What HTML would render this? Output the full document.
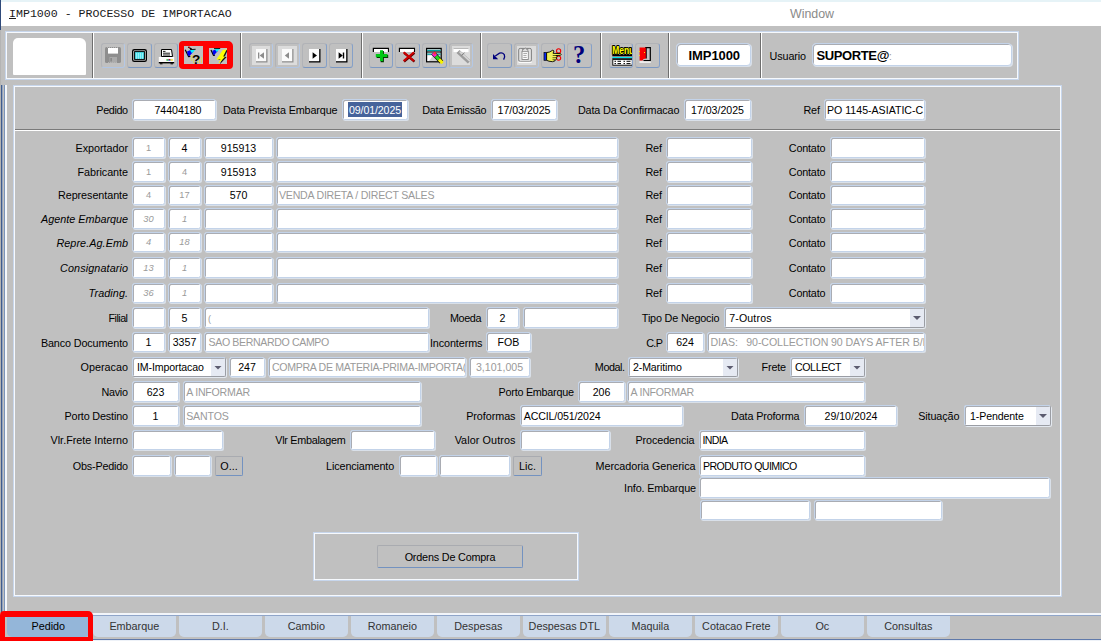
<!DOCTYPE html>
<html><head><meta charset="utf-8"><title>IMP1000 - PROCESSO DE IMPORTACAO</title>
<style>
html,body{margin:0;padding:0;}
body{width:1101px;height:641px;overflow:hidden;background:#c0c0c0;position:relative;font-family:"Liberation Sans",sans-serif;font-size:10.8px;color:#000;}
.a{position:absolute;white-space:pre;}
.l{position:absolute;white-space:pre;text-align:right;line-height:14px;height:14px;}
.i{font-style:italic;}
.f{position:absolute;box-sizing:border-box;background:#fff;border:1px solid #c3d3e9;border-radius:2.5px;box-shadow:inset 1px 1px 0 #a9acb3,1px 1px 0 #d9e0e9;white-space:pre;overflow:hidden;padding:0 3px;font-size:10.6px;}
.c{text-align:center;}
.r{text-align:right;}
.g{color:#9a9a9a;}
.sel{position:absolute;box-sizing:border-box;background:#fff;border:1px solid #c3d3e9;border-right-color:#9a9da4;border-bottom-color:#9a9da4;border-radius:2.5px;box-shadow:inset 1px 1px 0 #a9acb3,1px 1px 0 #e4e9f0;white-space:pre;overflow:hidden;padding:0 4px;font-size:10.6px;}
.sel i{position:absolute;right:0;top:1px;bottom:0;width:14px;background:#e6eaf3;}
.sel i:after{content:"";position:absolute;left:3px;top:calc(50% - 2px);width:8px;height:4px;background:#5c5c70;clip-path:polygon(0 0,100% 0,50% 100%);}
.btn{position:absolute;box-sizing:border-box;background:#c0c0c0;border:1px solid #a9abb0;border-right-color:#7392c0;border-bottom-color:#7392c0;border-radius:2px;text-align:center;white-space:pre;}
.tb{position:absolute;box-sizing:border-box;width:23px;height:25px;top:43px;border:1px solid #b1b3b7;border-right-color:#85a0c8;border-bottom-color:#7b98c2;border-radius:3px;background:#c0c0c0;}
.sep{position:absolute;top:33px;height:45px;width:1px;background:#6e6e6e;box-shadow:1px 0 0 #fff;}
.tab{position:absolute;top:616px;height:21px;box-sizing:border-box;background:#ccd9ea;border-radius:0 0 5px 5px;text-align:center;line-height:20px;white-space:pre;color:#333;}
</style></head><body>

<div class="a" style="left:0;top:0;width:1101px;height:26px;background:#fff"></div>
<div class="a" style="left:0;top:0;width:1101px;height:2px;background:#e6f3f7"></div>
<div class="a" style="left:9px;top:7px;font-family:'Liberation Mono',monospace;font-size:11.6px;line-height:14px;color:#1a1a1a"><u>I</u>MP1000 - PROCESSO DE IMPORTACAO</div>
<div class="a" style="left:790px;top:7px;font-size:12.4px;line-height:14px;color:#8a8a8a">Window</div>
<div class="a" style="left:0;top:0;width:1px;height:30px;background:#2f4a7a"></div>
<div class="a" style="left:0;top:30px;width:1px;height:583px;background:#b4b4b4"></div>
<div class="a" style="left:1px;top:85px;width:1px;height:528px;background:#3f5c8e"></div>
<div class="a" style="left:2px;top:85px;width:1px;height:528px;background:#93a3bd"></div>
<div class="a" style="left:4px;top:85px;width:1px;height:528px;background:#7b94ba"></div>
<div class="a" style="left:5px;top:85px;width:2px;height:528px;background:#f4f7fb"></div>
<div class="a" style="left:5px;top:31px;width:1014px;height:49px;box-sizing:border-box;border:1px solid #c7d6ec;box-shadow:inset 0 0 0 1px #f6f9fd"></div>
<div class="a" style="left:13px;top:38px;width:73px;height:37px;background:#fff;border-radius:5px 6px 1px 1px"></div>
<div class="sep" style="left:92px"></div>
<div class="sep" style="left:240px"></div>
<div class="sep" style="left:361px"></div>
<div class="sep" style="left:480px"></div>
<div class="sep" style="left:600px"></div>
<div class="sep" style="left:668px"></div>
<div class="sep" style="left:760px"></div>
<div class="tb" style="left:101px;width:24px;border-right-color:#b4c8e6;border-bottom-color:#b0c5e4"></div>
<div class="tb" style="left:127px;width:25px"></div>
<div class="tb" style="left:154px;width:24px"></div>
<svg class="a" style="left:104px;top:46px" width="18" height="18" viewBox="104 46 18 18"><rect x="105" y="47" width="16" height="16" rx="1.6" fill="#8e8e8e"/><rect x="108" y="48" width="10" height="5.600" fill="#fff"/><rect x="109.500" y="57" width="7.500" height="6" fill="#aaa"/><rect x="110.300" y="58" width="1.700" height="3.500" fill="#8a8a8a"/><path d="M107 47.500H119 M108 62.500H118" stroke="#b5b5b5" stroke-width="1" stroke-dasharray="1 1"/></svg>
<svg class="a" style="left:131px;top:48px" width="17" height="15" viewBox="131 48 17 15"><rect x="132.700" y="49.700" width="13.600" height="11.600" rx="1.600" fill="#fff" stroke="#000" stroke-width="1.400"/><rect x="134.600" y="51.600" width="9.800" height="7.800" fill="#4fe3ee" stroke="#000" stroke-width="1"/><path d="M136 54H143 M136 56H143 M136 58H143" stroke="#d8fbff" stroke-width="1" stroke-dasharray="1 1"/></svg>
<svg class="a" style="left:157px;top:47px" width="19" height="18" viewBox="157 47 19 18"><path d="M161.500 56.500 V49.500 H171.500 L172.500 56.500Z" fill="#fff" stroke="#000" stroke-width="1"/><path d="M163 51.400H165.500 M163 53.200H170 M163 55H170" stroke="#000" stroke-width="0.900"/><path d="M158.800 57 H174.200 V62.400 H158.800Z" fill="#fafafa"/><path d="M159 57.500H174" stroke="#fff" stroke-width="1"/><rect x="166.400" y="59.300" width="2" height="1.300" fill="#00b400"/><rect x="168.400" y="59.300" width="2.200" height="1.300" fill="#0000e0"/><rect x="168.700" y="59" width="1.500" height="0.800" fill="#e00000"/><rect x="170.600" y="59.300" width="2.200" height="1.300" fill="#f0e000"/><path d="M158.800 62.700H174.200" stroke="#000" stroke-width="1.400"/><rect x="160" y="63.300" width="2.500" height="1" fill="#000"/><rect x="170.500" y="63.300" width="2.500" height="1" fill="#000"/></svg>
<div class="a" style="left:179px;top:41px;width:54px;height:28px;background:#fe0000;border-radius:4px 5px 4px 4px"></div>
<div class="a" style="left:184px;top:46px;width:19px;height:18px;background:#c0c0c0"></div>
<div class="a" style="left:209px;top:48px;width:18px;height:16px;background:#c0c0c0"></div>
<svg class="a" style="left:184px;top:46px" width="19" height="18" viewBox="184 46 19 18"><path d="M185.200 49.800 L188.600 56.500 L190.300 56.300" fill="none" stroke="#000" stroke-width="1.200"/><path d="M188.200 47 L191.800 49.300" stroke="#000" stroke-width="1.200"/><circle cx="189.300" cy="47.200" r="0.700" fill="#e00"/><path d="M187 51.400 L190.500 50 L193.600 51.600 L189 56.400 L187.600 54.500Z" fill="#0000f4"/><path d="M189.800 50.200 L195.400 49.600 L192 53.200Z" fill="#00f4ff"/><path d="M190 49.600 L195.600 49.300" stroke="#000" stroke-width="0.900"/><g fill="#f4ec00"><rect x="191" y="55.500" width="1" height="1"/><rect x="193" y="55.500" width="1" height="1"/><rect x="191" y="57.500" width="1" height="1"/><rect x="193" y="57.500" width="1" height="1"/><rect x="191" y="59.500" width="1" height="1"/><rect x="193" y="59.500" width="1" height="1"/><rect x="193" y="61.500" width="1" height="1"/><rect x="199" y="57.500" width="1" height="1"/><rect x="201" y="57.500" width="1" height="1"/><rect x="199" y="59.500" width="1" height="1"/><rect x="201" y="59.500" width="1" height="1"/><rect x="199" y="61.500" width="1" height="1"/><rect x="201" y="61.500" width="1" height="1"/><rect x="197" y="61.500" width="1" height="1"/></g><text x="196.200" y="63.800" text-anchor="middle" font-family="Liberation Sans, sans-serif" font-weight="bold" font-size="13.500" fill="#000">?</text></svg>
<svg class="a" style="left:209px;top:48px" width="18" height="16" viewBox="209 48 18 16"><path d="M211 50 L213.500 55.300 L215 55.200" fill="none" stroke="#000" stroke-width="1.200"/><path d="M212.400 50.800 L215.500 49.600 L217.800 51 L214 55.300 L212.900 53.800Z" fill="#0000f4"/><path d="M214.600 48.900 L220 48.700 L216.700 51.900Z" fill="#00f4ff"/><path d="M214 48.600 L220.200 48.500" stroke="#000" stroke-width="0.900"/><path d="M223.500 50.100 L227 49.400 L223.800 56.300 L225.800 56.600 L218.800 64 L220.800 59.600 L217.300 59.600Z" fill="#111" transform="translate(0.900,0.400)"/><path d="M222.800 49.900 L226.800 49.300 L223.200 56.400 L225.300 56.600 L218.300 63.900 L220.400 59.500 L216.300 59.500Z" fill="#ffff00"/></svg>
<div class="tb" style="left:249px;width:24px;border-right-color:#b4c8e6;border-bottom-color:#b0c5e4"></div>
<div class="a" style="left:252px;top:46px;width:18px;height:19px;background:#dcdcdc"></div>
<svg class="a" style="left:253px;top:47px" width="17" height="18" viewBox="253 47 17 18"><rect x="256" y="49" width="11.500" height="13.500" fill="#909090"/><rect x="256" y="49" width="10.200" height="12.200" fill="#fbfbfb"/><rect x="258.0" y="52.500" width="1.300" height="6" fill="#8c8c8c"/><path d="M264.0 52.300 V58.700 L259.59999999999997 55.500Z" fill="#8c8c8c"/></svg>
<div class="tb" style="left:275px;width:25px;border-right-color:#b4c8e6;border-bottom-color:#b0c5e4"></div>
<div class="a" style="left:278px;top:46px;width:19px;height:19px;background:#dcdcdc"></div>
<svg class="a" style="left:279px;top:47px" width="17" height="18" viewBox="279 47 17 18"><rect x="282" y="49" width="11.500" height="13.500" fill="#909090"/><rect x="282" y="49" width="10.200" height="12.200" fill="#fbfbfb"/><path d="M289.0 52.300 V58.700 L284.8 55.500Z" fill="#8c8c8c"/></svg>
<div class="tb" style="left:302px;width:25px"></div>
<svg class="a" style="left:306px;top:47px" width="17" height="18" viewBox="306 47 17 18"><rect x="309" y="49" width="11.500" height="13.500" fill="#000"/><rect x="309" y="49" width="10.200" height="12.200" fill="#fbfbfb"/><path d="M312.59999999999997 52.300 V58.700 L317.0 55.500Z" fill="#000"/></svg>
<div class="tb" style="left:329px;width:24px"></div>
<svg class="a" style="left:333px;top:47px" width="17" height="18" viewBox="333 47 17 18"><rect x="336" y="49" width="11.500" height="13.500" fill="#000"/><rect x="336" y="49" width="10.200" height="12.200" fill="#fbfbfb"/><path d="M338.59999999999997 52.300 V58.700 L342.8 55.500Z" fill="#000"/><rect x="342.8" y="52.500" width="1.400" height="6" fill="#000"/></svg>
<div class="tb" style="left:369px;width:24px"></div>
<div class="tb" style="left:395px;width:25px"></div>
<div class="tb" style="left:422px;width:25px"></div>
<div class="tb" style="left:449px;width:24px;border-right-color:#b4c8e6;border-bottom-color:#b0c5e4"></div>
<div class="a" style="left:452px;top:46px;width:18px;height:19px;background:#dcdcdc"></div>
<svg class="a" style="left:372px;top:47px" width="19" height="16" viewBox="372 47 19 16"><path d="M373.400 52 V48.400 H388.300 V52" fill="#fff" stroke="#000" stroke-width="1.300"/><rect x="374" y="49" width="13.700" height="3" fill="#fff"/><path d="M380 50.500 H383.300 V54.200 H387.600 V57.400 H383.300 V61.600 H380 V57.400 H376 V54.200 H380Z" fill="#003c00" transform="translate(0.600,0.600)"/><path d="M380 50.300 H383 V54 H387.300 V57 H383 V61 H380 V57 H375.800 V54 H380Z" fill="#00c814"/></svg>
<svg class="a" style="left:398px;top:47px" width="20" height="16" viewBox="398 47 20 16"><path d="M399.500 52 V48.400 H414.400 V52" fill="#fff" stroke="#000" stroke-width="1.300"/><rect x="400.100" y="49" width="13.700" height="3" fill="#fff"/><path d="M403.600 52.300 L414 61 M414 52.300 L403.600 61" stroke="#5a0000" stroke-width="2.200" transform="translate(0.500,0.600)"/><path d="M403.600 52.300 L414 61 M414 52.300 L403.600 61" stroke="#cc0000" stroke-width="2.100"/></svg>
<svg class="a" style="left:425px;top:47px" width="20" height="18" viewBox="425 47 20 18"><rect x="426.600" y="48.400" width="14.600" height="13.400" fill="#d0d0d0" stroke="#000" stroke-width="1.200"/><rect x="427.200" y="49.800" width="13.400" height="1.400" fill="#00a0a0"/><path d="M427 52H441" stroke="#000" stroke-width="1"/><rect x="427.200" y="53.600" width="13.400" height="1.200" fill="#00a0a0"/><path d="M427.500 55.500 H433 L429 61 H427.500Z" fill="#fff"/><path d="M433 53 L441.500 62" stroke="#000" stroke-width="4.600"/><path d="M433 53 L436 56.200" stroke="#ff20d0" stroke-width="3.400"/><path d="M434 52.600 L435.600 54" stroke="#ff3030" stroke-width="2.600"/><path d="M436 56.200 L439 59.400" stroke="#20d820" stroke-width="3.400"/><path d="M439 59.400 L442.600 63.200" stroke="#f4f000" stroke-width="3.200"/></svg>
<svg class="a" style="left:452px;top:47px" width="20" height="18" viewBox="452 47 20 18"><rect x="453.500" y="48.300" width="15" height="3.800" fill="#fff"/><path d="M453.500 48.500H468.500" stroke="#b8b8b8" stroke-width="1"/><path d="M458 51.500 L469.300 62" stroke="#9c9c9c" stroke-width="4.400"/><path d="M459.600 51.600 L470 61.200" stroke="#d6d6d6" stroke-width="1.600"/><path d="M461.500 55.500 L464.500 52.800" stroke="#7c7c7c" stroke-width="1"/></svg>
<div class="tb" style="left:487px;width:25px"></div>
<div class="tb" style="left:514px;width:25px;border-right-color:#b4c8e6;border-bottom-color:#b0c5e4"></div>
<div class="a" style="left:517px;top:46px;width:19px;height:19px;background:#dcdcdc"></div>
<div class="tb" style="left:541px;width:24px"></div>
<div class="tb" style="left:567px;width:25px"></div>
<svg class="a" style="left:491px;top:50px" width="17" height="13" viewBox="491 50 17 13"><path d="M495.300 56 L499.500 53.200 Q502.500 52.300 504.300 54.600 Q505.300 56.500 503.600 59.600" fill="none" stroke="#00007c" stroke-width="1.300"/><path d="M493 54 L493 59.200 L498.200 59.200Z" fill="#00007c"/></svg>
<svg class="a" style="left:517px;top:46px" width="18" height="19" viewBox="517 46 18 19"><rect x="518.700" y="48.400" width="12.700" height="13" rx="1.500" fill="#e2e2e2" stroke="#808080" stroke-width="1"/><path d="M518.500 62.300H531.600" stroke="#fff" stroke-width="1.100"/><rect x="522" y="51.300" width="6.300" height="8.200" fill="#fff" stroke="#868686" stroke-width="0.900"/><path d="M522.500 50.800 V49.300 H523.800 Q525.200 46.600 526.600 49.300 H527.800 V50.800" fill="#e2e2e2" stroke="#808080" stroke-width="0.900"/><path d="M523.300 53.400H527 M523.300 55.400H526.500 M523.300 57.400H526.800" stroke="#9a9a9a" stroke-width="0.900"/></svg>
<svg class="a" style="left:543px;top:48px" width="20" height="16" viewBox="543 48 20 16"><circle cx="558.600" cy="50.900" r="2.100" fill="none" stroke="#f00000" stroke-width="1.100"/><circle cx="558.600" cy="58.100" r="2.100" fill="none" stroke="#f00000" stroke-width="1.100"/><path d="M557.800 52.800 L556.600 56 M557.800 56.200 L556.600 53.200" stroke="#f00000" stroke-width="1"/><rect x="544" y="52.500" width="2.600" height="7.800" fill="#0a28f0" stroke="#000" stroke-width="0.700"/><path d="M546.600 52.600 L549.500 52 L552.800 50.200 L554 51 L553 53.300 L560.500 53.600 Q561.800 54.400 560.500 55.300 L556 55.500 L557 56.600 L556.300 57.800 L556.600 58.800 L555.400 59.800 L555 60.800 L552.500 61.700 L549 61.200 L546.600 60.300Z" fill="#f2f250" stroke="#000" stroke-width="0.900" stroke-linejoin="round"/><path d="M552.500 55.500H556 M552.500 57.700H556 M552.500 59.700H555" stroke="#000" stroke-width="0.600"/><path d="M548 54L552 58 M548 56.500L551.500 60 M550 53L553 56" stroke="#d8d8a0" stroke-width="0.500"/></svg>
<svg class="a" style="left:571px;top:44px" width="18" height="22" viewBox="571 44 18 22"><text x="579.200" y="63" text-anchor="middle" font-family="Liberation Serif, serif" font-weight="bold" font-size="24.500" fill="#00007c">?</text></svg>
<div class="tb" style="left:609px;width:24px"></div>
<div class="tb" style="left:635px;width:25px"></div>
<svg class="a" style="left:611px;top:45px" width="21" height="22" viewBox="611 45 21 22"><text x="612.200" y="54.300" font-family="Liberation Sans, sans-serif" font-weight="bold" font-size="10.500" fill="#000" stroke="#000" stroke-width="2" stroke-linejoin="round" textLength="22" lengthAdjust="spacingAndGlyphs">Menu</text><text x="612.200" y="54.300" font-family="Liberation Sans, sans-serif" font-weight="bold" font-size="10.500" fill="#ffff00" textLength="22" lengthAdjust="spacingAndGlyphs">Menu</text><rect x="612.300" y="55" width="20" height="1.300" fill="#000"/><rect x="612.300" y="57" width="20" height="1.300" fill="#00e8f0"/><rect x="612.300" y="58.300" width="20" height="0.900" fill="#000"/><rect x="612.800" y="59.600" width="19.500" height="5.600" fill="#fff" stroke="#000" stroke-width="0.900"/><path d="M614.500 61.300H616 M617.500 61.300H621 M623.500 61.300H625 M626.500 61.300H630.500 M614.500 63.600H616 M617.500 63.600H621 M623.500 63.600H625 M626.500 63.600H630.500" stroke="#000" stroke-width="1"/></svg>
<svg class="a" style="left:638px;top:46px" width="14" height="18" viewBox="638 46 14 18"><path d="M645 47.600 H650.300 V60.600 H643.500" fill="#c4c4c4" stroke="#000" stroke-width="1.200"/><path d="M639.600 47.400 H646.200 V58.500 L643.500 58.900 L642.500 60.400 H639.600Z" fill="#f80000"/><path d="M646.300 47.400V58.500" stroke="#000" stroke-width="0.900"/><rect x="644" y="52" width="1" height="1" fill="#ffe000"/><rect x="638.800" y="51" width="1" height="1" fill="#ffe000"/><rect x="638.800" y="55" width="1" height="1" fill="#ffe000"/><path d="M639.500 62H650.800" stroke="#fff" stroke-width="1.400"/></svg>
<div class="f" style="left:676px;top:43px;width:75px;height:23px;line-height:23px;font-weight:bold;font-size:13px;border-radius:4px;padding:0"><span style="position:absolute;left:11.600px;top:0;letter-spacing:-0.100px">IMP1000</span></div>
<div class="a" style="left:769.500px;top:49px;line-height:14px;letter-spacing:-0.100px">Usuario</div>
<div class="f" style="left:812px;top:43px;width:200px;height:23px;line-height:23px;font-weight:bold;font-size:13px;border-radius:4px;padding:0"><span style="position:absolute;left:3.600px;top:0;letter-spacing:-0.400px">SUPORTE@<span style="font-weight:normal;color:#999;font-size:10px">:</span></span></div>
<div class="a" style="left:13px;top:85px;width:1049px;height:512px;box-sizing:border-box;border:1px solid #c7d6ec;box-shadow:inset 0 0 0 1px #f6f9fd"></div>
<div class="a" style="left:15px;top:129px;width:1045px;height:1px;background:#7a7a7a"></div>
<div class="a" style="left:15px;top:130px;width:1045px;height:1px;background:#fff"></div>
<div class="l" style="right:973.39px;top:103px;letter-spacing:-0.388px;">Pedido</div>
<div class="f " style="left:132px;top:99px;width:84px;height:21px;line-height:20px;"><span style="letter-spacing:-0.020px;position:absolute;left:21.5px;top:0;">74404180</span></div>
<div class="l" style="right:763.64px;top:103px;letter-spacing:-0.143px;">Data Prevista Embarque</div>
<div class="f" style="left:342px;top:99px;width:66px;height:21px"><span style="position:absolute;left:5px;top:2px;height:15px;line-height:17px;background:#46639a;color:#fff;width:54px;text-align:center;letter-spacing:-0.105px;">09/01/2025</span></div>
<div class="l" style="right:614.77px;top:103px;letter-spacing:-0.269px;">Data Emissão</div>
<div class="f c" style="left:491px;top:99px;width:66px;height:21px;line-height:20px;">17/03/2025</div>
<div class="l" style="right:421.62px;top:103px;letter-spacing:-0.123px;">Data Da Confirmacao</div>
<div class="f c" style="left:684px;top:99px;width:67px;height:21px;line-height:20px;">17/03/2025</div>
<div class="l" style="right:281.10px;top:103px;letter-spacing:-0.102px;">Ref</div>
<div class="f " style="left:824px;top:99px;width:101px;height:21px;line-height:20px;"><span style="position:absolute;left:2px;top:0;">PO 1145-ASIATIC-C</span></div>
<div class="l" style="right:973.03px;top:141px;letter-spacing:-0.033px;">Exportador</div>
<div class="f c g" style="left:132px;top:137px;width:33px;height:21px;line-height:20px;font-size:9.3px;">1</div>
<div class="f c " style="left:168px;top:137px;width:33px;height:21px;line-height:20px;">4</div>
<div class="f c" style="left:204px;top:137px;width:69px;height:21px;line-height:20px;">915913</div>
<div class="f g" style="left:276px;top:137px;width:342px;height:21px;line-height:20px;"></div>
<div class="l" style="right:439.10px;top:141px;letter-spacing:-0.102px;">Ref</div>
<div class="f " style="left:666px;top:137px;width:86px;height:21px;line-height:20px;"></div>
<div class="l" style="right:275.69px;top:141px;letter-spacing:-0.189px;">Contato</div>
<div class="f " style="left:830px;top:137px;width:95px;height:21px;line-height:20px;"></div>
<div class="l" style="right:973.05px;top:165px;letter-spacing:-0.052px;">Fabricante</div>
<div class="f c g" style="left:132px;top:161px;width:33px;height:21px;line-height:20px;font-size:9.3px;">1</div>
<div class="f c g" style="left:168px;top:161px;width:33px;height:21px;line-height:20px;font-size:9.3px;">4</div>
<div class="f c" style="left:204px;top:161px;width:69px;height:21px;line-height:20px;">915913</div>
<div class="f g" style="left:276px;top:161px;width:342px;height:21px;line-height:20px;"></div>
<div class="l" style="right:439.10px;top:165px;letter-spacing:-0.102px;">Ref</div>
<div class="f " style="left:666px;top:161px;width:86px;height:21px;line-height:20px;"></div>
<div class="l" style="right:275.69px;top:165px;letter-spacing:-0.189px;">Contato</div>
<div class="f " style="left:830px;top:161px;width:95px;height:21px;line-height:20px;"></div>
<div class="l" style="right:973.06px;top:188px;letter-spacing:-0.065px;">Representante</div>
<div class="f c g" style="left:132px;top:185px;width:33px;height:20px;line-height:19px;font-size:9.3px;">4</div>
<div class="f c g" style="left:168px;top:185px;width:33px;height:20px;line-height:19px;font-size:9.3px;">17</div>
<div class="f c" style="left:204px;top:185px;width:69px;height:20px;line-height:19px;">570</div>
<div class="f g" style="left:276px;top:185px;width:342px;height:20px;line-height:19px;"><span style="letter-spacing:-0.233px;position:absolute;left:2px;top:0;">VENDA DIRETA / DIRECT SALES</span></div>
<div class="l" style="right:439.10px;top:188px;letter-spacing:-0.102px;">Ref</div>
<div class="f " style="left:666px;top:185px;width:86px;height:20px;line-height:19px;"></div>
<div class="l" style="right:275.69px;top:188px;letter-spacing:-0.189px;">Contato</div>
<div class="f " style="left:830px;top:185px;width:95px;height:20px;line-height:19px;"></div>
<div class="l i" style="right:973.00px;top:212px;letter-spacing:-0.004px;">Agente Embarque</div>
<div class="f c g i" style="left:132px;top:208px;width:33px;height:21px;line-height:20px;font-size:9.3px;">30</div>
<div class="f c g i" style="left:168px;top:208px;width:33px;height:21px;line-height:20px;font-size:9.3px;">1</div>
<div class="f c" style="left:204px;top:208px;width:69px;height:21px;line-height:20px;"></div>
<div class="f g" style="left:276px;top:208px;width:342px;height:21px;line-height:20px;"></div>
<div class="l" style="right:439.10px;top:212px;letter-spacing:-0.102px;">Ref</div>
<div class="f " style="left:666px;top:208px;width:86px;height:21px;line-height:20px;"></div>
<div class="l" style="right:275.69px;top:212px;letter-spacing:-0.189px;">Contato</div>
<div class="f " style="left:830px;top:208px;width:95px;height:21px;line-height:20px;"></div>
<div class="l i" style="right:972.93px;top:236px;letter-spacing:0.073px;">Repre.Ag.Emb</div>
<div class="f c g i" style="left:132px;top:232px;width:33px;height:20px;line-height:19px;font-size:9.3px;">4</div>
<div class="f c g i" style="left:168px;top:232px;width:33px;height:20px;line-height:19px;font-size:9.3px;">18</div>
<div class="f c" style="left:204px;top:232px;width:69px;height:20px;line-height:19px;"></div>
<div class="f g" style="left:276px;top:232px;width:342px;height:20px;line-height:19px;"></div>
<div class="l" style="right:439.10px;top:236px;letter-spacing:-0.102px;">Ref</div>
<div class="f " style="left:666px;top:232px;width:86px;height:20px;line-height:19px;"></div>
<div class="l" style="right:275.69px;top:236px;letter-spacing:-0.189px;">Contato</div>
<div class="f " style="left:830px;top:232px;width:95px;height:20px;line-height:19px;"></div>
<div class="l i" style="right:972.90px;top:261px;letter-spacing:0.105px;">Consignatario</div>
<div class="f c g i" style="left:132px;top:257px;width:33px;height:21px;line-height:20px;font-size:9.3px;">13</div>
<div class="f c g i" style="left:168px;top:257px;width:33px;height:21px;line-height:20px;font-size:9.3px;">1</div>
<div class="f c" style="left:204px;top:257px;width:69px;height:21px;line-height:20px;"></div>
<div class="f g" style="left:276px;top:257px;width:342px;height:21px;line-height:20px;"></div>
<div class="l" style="right:439.10px;top:261px;letter-spacing:-0.102px;">Ref</div>
<div class="f " style="left:666px;top:257px;width:86px;height:21px;line-height:20px;"></div>
<div class="l" style="right:275.69px;top:261px;letter-spacing:-0.189px;">Contato</div>
<div class="f " style="left:830px;top:257px;width:95px;height:21px;line-height:20px;"></div>
<div class="l i" style="right:972.91px;top:286px;letter-spacing:0.086px;">Trading.</div>
<div class="f c g i" style="left:132px;top:283px;width:33px;height:20px;line-height:19px;font-size:9.3px;">36</div>
<div class="f c g i" style="left:168px;top:283px;width:33px;height:20px;line-height:19px;font-size:9.3px;">1</div>
<div class="f c" style="left:204px;top:283px;width:69px;height:20px;line-height:19px;"></div>
<div class="f g" style="left:276px;top:283px;width:342px;height:20px;line-height:19px;"></div>
<div class="l" style="right:439.10px;top:286px;letter-spacing:-0.102px;">Ref</div>
<div class="f " style="left:666px;top:283px;width:86px;height:20px;line-height:19px;"></div>
<div class="l" style="right:275.69px;top:286px;letter-spacing:-0.189px;">Contato</div>
<div class="f " style="left:830px;top:283px;width:95px;height:20px;line-height:19px;"></div>
<div class="l" style="right:973.53px;top:311px;letter-spacing:-0.533px;">Filial</div>
<div class="f " style="left:132px;top:307px;width:33px;height:21px;line-height:20px;"></div>
<div class="f c" style="left:168px;top:307px;width:33px;height:21px;line-height:20px;">5</div>
<div class="f g" style="left:204px;top:307px;width:225px;height:21px;line-height:20px;"><span style="font-size:9px">(</span></div>
<div class="l" style="right:619.86px;top:311px;letter-spacing:-0.364px;">Moeda</div>
<div class="f c" style="left:486px;top:307px;width:33px;height:21px;line-height:20px;">2</div>
<div class="f " style="left:523px;top:307px;width:95px;height:21px;line-height:20px;"></div>
<div class="l" style="right:381.67px;top:311px;letter-spacing:-0.169px;">Tipo De Negocio</div>
<div class="sel" style="left:724px;top:307px;width:201px;height:21px;line-height:20px"><span style="letter-spacing:0.158px;position:absolute;left:4.2000000000000455px;top:0;">7-Outros</span><i></i></div>
<div class="l" style="right:973.12px;top:336px;letter-spacing:-0.123px;">Banco Documento</div>
<div class="f c" style="left:132px;top:332px;width:33px;height:20px;line-height:19px;">1</div>
<div class="f c" style="left:168px;top:332px;width:33px;height:20px;line-height:19px;">3357</div>
<div class="f g" style="left:204px;top:332px;width:225px;height:20px;line-height:19px;"><span style="letter-spacing:-0.374px;position:absolute;left:3.5px;top:0;">SAO BERNARDO CAMPO</span></div>
<div class="l" style="right:618.59px;top:336px;letter-spacing:-0.092px;">Inconterms</div>
<div class="f c" style="left:486px;top:332px;width:45px;height:20px;line-height:19px;">FOB</div>
<div class="l" style="right:438.57px;top:336px;letter-spacing:-0.568px;">C.P</div>
<div class="f c" style="left:666px;top:332px;width:38px;height:20px;line-height:19px;">624</div>
<div class="f g" style="left:707px;top:332px;width:218px;height:20px;line-height:19px;"><span style="letter-spacing:-0.086px;position:absolute;left:2.5px;top:0;">DIAS:   90-COLLECTION 90 DAYS AFTER B/I</span></div>
<div class="l" style="right:972.99px;top:360px;letter-spacing:0.009px;">Operacao</div>
<div class="sel" style="left:132px;top:357px;width:94px;height:20px;line-height:19px"><span style="letter-spacing:-0.125px;position:absolute;left:4px;top:0;">IM-Importacao</span><i></i></div>
<div class="f c" style="left:229px;top:357px;width:36px;height:20px;line-height:19px;">247</div>
<div class="f g" style="left:268px;top:357px;width:198px;height:20px;line-height:19px;"><span style="letter-spacing:-0.324px;position:absolute;left:3px;top:0;">COMPRA DE MATERIA-PRIMA-IMPORTA(</span></div>
<div class="f g c" style="left:469px;top:357px;width:61px;height:20px;line-height:19px;">3,101,005</div>
<div class="l" style="right:476.45px;top:360px;letter-spacing:-0.452px;">Modal.</div>
<div class="sel" style="left:628px;top:357px;width:110px;height:20px;line-height:19px"><span style="letter-spacing:-0.136px;position:absolute;left:4px;top:0;">2-Maritimo</span><i></i></div>
<div class="l" style="right:315.20px;top:360px;letter-spacing:-0.201px;">Frete</div>
<div class="sel" style="left:790px;top:357px;width:75px;height:20px;line-height:19px"><span style="letter-spacing:-0.384px;position:absolute;left:4px;top:0;">COLLECT</span><i></i></div>
<div class="l" style="right:973.26px;top:385px;letter-spacing:-0.262px;">Navio</div>
<div class="f c" style="left:132px;top:381px;width:47px;height:21px;line-height:20px;">623</div>
<div class="f g" style="left:183px;top:381px;width:238px;height:21px;line-height:20px;"><span style="letter-spacing:-0.216px;position:absolute;left:2.1999999999999886px;top:0;">A INFORMAR</span></div>
<div class="l" style="right:527.25px;top:385px;letter-spacing:-0.246px;">Porto Embarque</div>
<div class="f c" style="left:578px;top:381px;width:47px;height:21px;line-height:20px;">206</div>
<div class="f g" style="left:627px;top:381px;width:238px;height:21px;line-height:20px;"><span style="letter-spacing:-0.246px;position:absolute;left:2.5px;top:0;">A INFORMAR</span></div>
<div class="l" style="right:973.16px;top:409px;letter-spacing:-0.164px;">Porto Destino</div>
<div class="f c" style="left:132px;top:405px;width:47px;height:21px;line-height:20px;">1</div>
<div class="f g" style="left:183px;top:405px;width:238px;height:21px;line-height:20px;"><span style="letter-spacing:-0.149px;position:absolute;left:2.1999999999999886px;top:0;">SANTOS</span></div>
<div class="l" style="right:585.56px;top:409px;letter-spacing:-0.057px;">Proformas</div>
<div class="f " style="left:520px;top:405px;width:163px;height:21px;line-height:20px;"><span style="letter-spacing:-0.112px;position:absolute;left:2.7000000000000455px;top:0;">ACCIL/051/2024</span></div>
<div class="l" style="right:301.65px;top:409px;letter-spacing:-0.148px;">Data Proforma</div>
<div class="f " style="left:804px;top:405px;width:93px;height:21px;line-height:20px;"><span style="letter-spacing:-0.005px;position:absolute;left:19.5px;top:0;">29/10/2024</span></div>
<div class="l" style="right:141.59px;top:409px;letter-spacing:-0.091px;">Situação</div>
<div class="sel" style="left:964px;top:405px;width:87px;height:21px;line-height:20px"><span style="letter-spacing:-0.111px;position:absolute;left:5px;top:0;">1-Pendente</span><i></i></div>
<div class="l" style="right:973.00px;top:433px;letter-spacing:0.004px;">Vlr.Frete Interno</div>
<div class="f " style="left:132px;top:430px;width:91px;height:20px;line-height:19px;"></div>
<div class="l" style="right:755.58px;top:433px;letter-spacing:-0.279px;">Vlr Embalagem</div>
<div class="f " style="left:350px;top:430px;width:85px;height:20px;line-height:19px;"></div>
<div class="l" style="right:585.40px;top:433px;letter-spacing:0.098px;">Valor Outros</div>
<div class="f " style="left:520px;top:430px;width:90px;height:20px;line-height:19px;"></div>
<div class="l" style="right:406.59px;top:433px;letter-spacing:-0.094px;">Procedencia</div>
<div class="f " style="left:699px;top:430px;width:166px;height:20px;line-height:19px;"><span style="letter-spacing:-0.654px;position:absolute;left:2.5px;top:0;">INDIA</span></div>
<div class="l" style="right:973.20px;top:459px;letter-spacing:-0.203px;">Obs-Pedido</div>
<div class="f " style="left:132px;top:455px;width:39px;height:21px;line-height:20px;"></div>
<div class="f " style="left:174px;top:455px;width:37px;height:21px;line-height:20px;"></div>
<div class="btn" style="left:215px;top:456px;width:28px;height:20px;line-height:18px">O...</div>
<div class="l" style="right:706.93px;top:459px;letter-spacing:-0.126px;">Licenciamento</div>
<div class="f " style="left:399px;top:455px;width:38px;height:21px;line-height:20px;"></div>
<div class="f " style="left:439px;top:455px;width:71px;height:21px;line-height:20px;"></div>
<div class="btn" style="left:513px;top:456px;width:29px;height:20px;line-height:18px">Lic.</div>
<div class="l" style="right:405.54px;top:459px;letter-spacing:-0.044px;">Mercadoria Generica</div>
<div class="f " style="left:699px;top:455px;width:166px;height:21px;line-height:20px;"><span style="letter-spacing:-0.571px;position:absolute;left:3px;top:0;">PRODUTO QUIMICO</span></div>
<div class="l" style="right:405.15px;top:481px;letter-spacing:-0.146px;">Info. Embarque</div>
<div class="f " style="left:699px;top:477px;width:351px;height:21px;line-height:20px;"></div>
<div class="f " style="left:700px;top:500px;width:110px;height:20px;line-height:19px;"></div>
<div class="f " style="left:814px;top:500px;width:128px;height:20px;line-height:19px;"></div>
<div class="a" style="left:313px;top:532px;width:266px;height:49px;box-sizing:border-box;border:1px solid #c7d6ec;box-shadow:inset 0 0 0 1px #f6f9fd"></div>
<div class="btn" style="left:377px;top:545px;width:146px;height:23px;line-height:22px"><span style="letter-spacing:-0.183px;">Ordens De Compra</span></div>
<div class="a" style="left:0;top:613px;width:1101px;height:2px;background:#f2f5fa"></div>
<div class="a" style="left:0;top:615px;width:1101px;height:1px;background:#8fa5c9"></div>
<div class="a" style="left:0;top:639px;width:1101px;height:1px;background:#5f79aa"></div>
<div class="a" style="left:0;top:640px;width:1101px;height:1px;background:#eef2f8"></div>
<div class="tab" style="left:6.8px;width:83px;background:#94b6d9;color:#000;">Pedido</div>
<div class="tab" style="left:92.8px;width:83px;">Embarque</div>
<div class="tab" style="left:178.8px;width:83px;">D.I.</div>
<div class="tab" style="left:264.8px;width:83px;">Cambio</div>
<div class="tab" style="left:350.8px;width:83px;">Romaneio</div>
<div class="tab" style="left:436.8px;width:83px;">Despesas</div>
<div class="tab" style="left:522.8px;width:83px;">Despesas DTL</div>
<div class="tab" style="left:608.8px;width:83px;">Maquila</div>
<div class="tab" style="left:694.8px;width:83px;">Cotacao Frete</div>
<div class="tab" style="left:780.8px;width:83px;">Oc</div>
<div class="tab" style="left:866.8px;width:83px;">Consultas</div>
<div class="a" style="left:0;top:611px;width:93px;height:30px;box-sizing:border-box;border:5px solid #fe0000;border-top-width:6px;border-bottom-width:4px;border-radius:4px 5px 0 0"></div>

</body></html>
